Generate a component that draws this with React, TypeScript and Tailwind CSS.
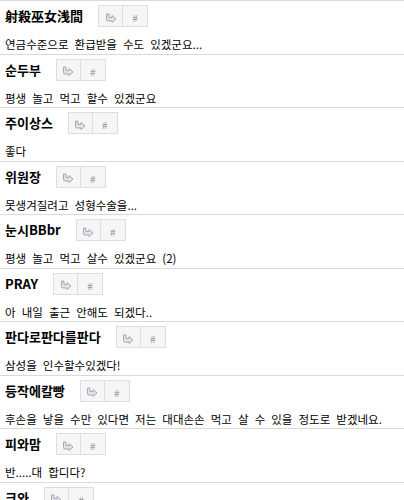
const comments = [
  { name: '射殺巫女浅間', text: '연금수준으로 환급받을 수도 있겠군요...' },
  { name: '순두부', text: '평생 놀고 먹고 할수 있겠군요' },
  { name: '주이상스', text: '좋다' },
  { name: '위원장', text: '못생겨질려고 성형수술을...' },
  { name: '눈시BBbr', text: '평생 놀고 먹고 살수 있겠군요 (2)' },
  { name: 'PRAY', text: '아 내일 출근 안해도 되겠다..' },
  { name: '판다로판다를판다', text: '삼성을 인수할수있겠다!' },
  { name: '등작에칼빵', text: '후손을 낳을 수만 있다면 저는 대대손손 먹고 살 수 있을 정도로 받겠네요.' },
  { name: '피와맘', text: '반.....대 합디다?' },
  { name: '크와', text: '' },
]

function ReplyIcon() {
  return (
    <svg width="12" height="10" viewBox="0 0 12 10" className="mt-[3px]">
      <path
        d="M1.5 1 L1.5 6.5 Q1.5 8 3 8 L7 8 L7 9.5 L11 6 L7 2.5 L7 4.5 L4 4.5 L4 1 Z"
        fill="#e4e2ea"
        stroke="#a9a6b3"
        strokeWidth="1"
        strokeLinejoin="round"
      />
    </svg>
  )
}

function Buttons() {
  return (
    <div className="flex h-[22px] border border-[#dedede] bg-[#f6f6f6]">
      <span className="flex w-6 items-center justify-center border-r border-[#dedede]">
        <ReplyIcon />
      </span>
      <span className="flex w-6 items-center justify-center pt-[3px] text-[10px] text-[#9a9a9a]">#</span>
    </div>
  )
}

function Comment({ name, text }: { name: string; text: string }) {
  return (
    <div className="border-t border-[#d9d9d9] px-[5px]">
      <div className="mt-[4px] flex h-[22px] items-center gap-[15px]">
        <span className="text-[13px] font-bold text-black">{name}</span>
        <Buttons />
      </div>
      <p className="mt-[9px] h-[17.5px] whitespace-nowrap text-[11.5px] leading-[17.5px] text-black [word-spacing:3.5px]">
        {text}
      </p>
    </div>
  )
}

export default function App() {
  return (
    <div className="h-[500px] w-[404px] overflow-hidden bg-white font-['Noto_Sans_CJK_KR','Liberation_Sans',sans-serif]">
      {comments.map((c, i) => (
        <Comment key={i} name={c.name} text={c.text} />
      ))}
    </div>
  )
}
